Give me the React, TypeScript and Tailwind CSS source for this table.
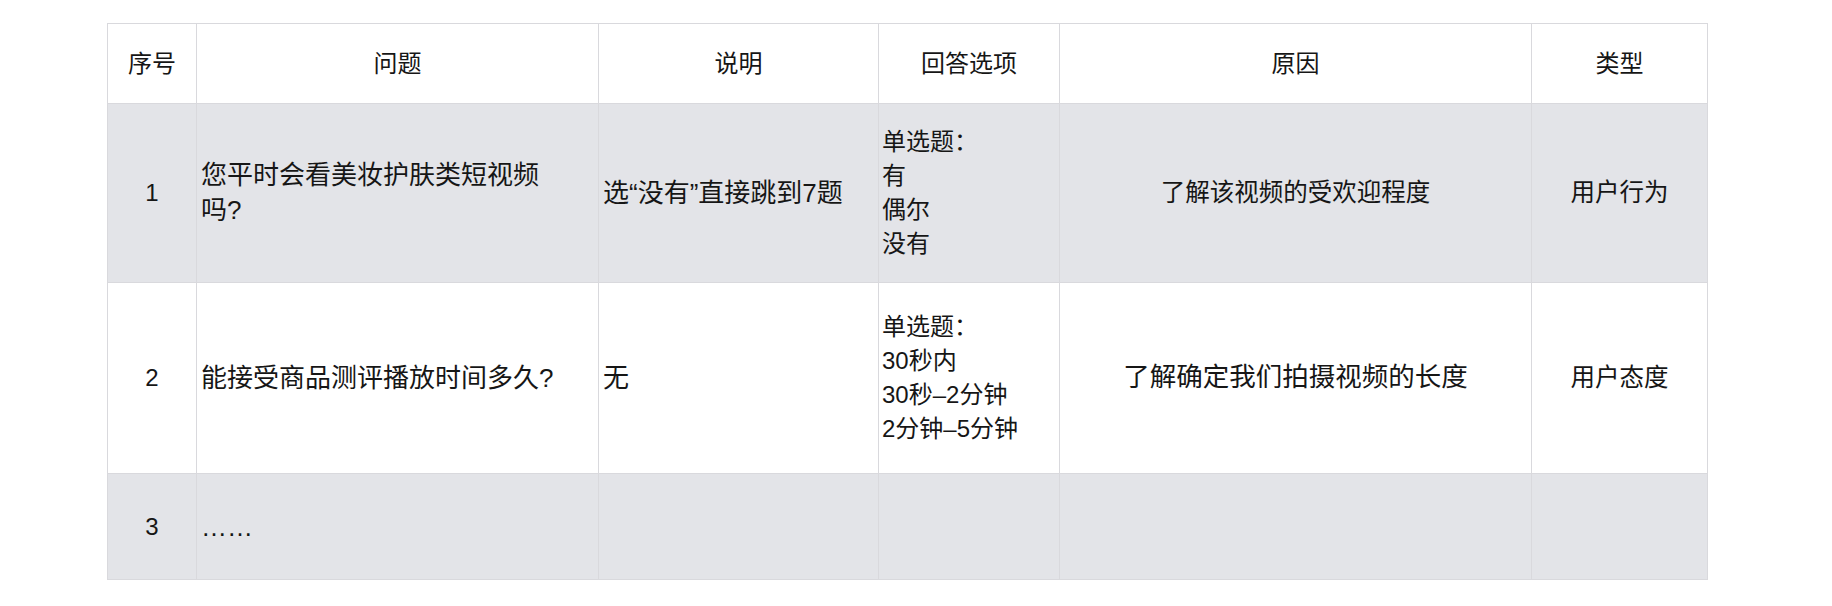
import React from "react";

const cell = "border border-[#d9d9dd] align-middle";

export default function App() {
  return (
    <div className="min-h-screen bg-white pl-[107px] pt-[23px] font-['Liberation_Sans','Noto_Sans_CJK_SC',sans-serif] text-[#161616]">
      <table className="w-[1600px] table-fixed border-collapse">
        <colgroup>
          <col className="w-[89px]" />
          <col className="w-[402px]" />
          <col className="w-[280px]" />
          <col className="w-[181px]" />
          <col className="w-[472px]" />
          <col className="w-[176px]" />
        </colgroup>
        <thead>
          <tr className="h-[80px] bg-white text-[24px] leading-[34px]">
            <th className={`${cell} text-center font-normal`}>序号</th>
            <th className={`${cell} text-center font-normal`}>问题</th>
            <th className={`${cell} text-center font-normal`}>说明</th>
            <th className={`${cell} text-center font-normal`}>回答选项</th>
            <th className={`${cell} text-center font-normal`}>原因</th>
            <th className={`${cell} text-center font-normal`}>类型</th>
          </tr>
        </thead>
        <tbody>
          <tr className="h-[179px] bg-[#e3e4e8]">
            <td className={`${cell} text-center text-[24px]`}>1</td>
            <td className={`${cell} pl-[4px] pr-[30px] text-[26px] leading-[35px]`}>
              您平时会看美妆护肤类短视频吗?
            </td>
            <td className={`${cell} pl-[4px] text-[26px] leading-[35px]`}>选“没有”直接跳到7题</td>
            <td className={`${cell} pl-[3px] text-[24px] leading-[34px]`}>
              <div>单选题：</div>
              <div>有</div>
              <div>偶尔</div>
              <div>没有</div>
            </td>
            <td className={`${cell} text-center text-[24.5px]`}>了解该视频的受欢迎程度</td>
            <td className={`${cell} text-center text-[24.5px]`}>用户行为</td>
          </tr>
          <tr className="h-[191px] bg-white">
            <td className={`${cell} text-center text-[24px]`}>2</td>
            <td className={`${cell} pl-[4px] text-[26px] leading-[35px]`}>能接受商品测评播放时间多久?</td>
            <td className={`${cell} pl-[4px] text-[26px] leading-[35px]`}>无</td>
            <td className={`${cell} pl-[3px] text-[24px] leading-[34px]`}>
              <div>单选题：</div>
              <div>30秒内</div>
              <div>30秒–2分钟</div>
              <div>2分钟–5分钟</div>
            </td>
            <td className={`${cell} text-center text-[26.5px]`}>了解确定我们拍摄视频的长度</td>
            <td className={`${cell} text-center text-[24.5px]`}>用户态度</td>
          </tr>
          <tr className="h-[106px] bg-[#e3e4e8]">
            <td className={`${cell} text-center text-[24px]`}>3</td>
            <td className={`${cell} pl-[4px] text-[26px] leading-[35px]`}>
              <span className="relative top-[1px]">……</span>
            </td>
            <td className={cell}></td>
            <td className={cell}></td>
            <td className={cell}></td>
            <td className={cell}></td>
          </tr>
        </tbody>
      </table>
    </div>
  );
}
